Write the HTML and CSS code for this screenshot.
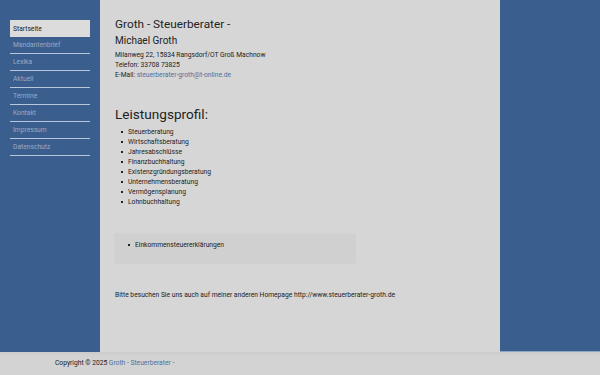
FILE: index.html
```html
<!DOCTYPE html>
<html lang="de">
<head>
<meta charset="utf-8">
<title>Groth - Steuerberater -</title>
<link rel="stylesheet" href="styles.css">
</head>
<body>
<div class="page">
  <nav class="sidebar">
    <ul class="menu">
      <li class="item active"><a href="#">Startseite</a></li>
      <li class="item"><a href="#">Mandantenbrief</a></li>
      <li class="item"><a href="#">Lexika</a></li>
      <li class="item"><a href="#">Aktuell</a></li>
      <li class="item"><a href="#">Termine</a></li>
      <li class="item"><a href="#">Kontakt</a></li>
      <li class="item"><a href="#">Impressum</a></li>
      <li class="item"><a href="#">Datenschutz</a></li>
    </ul>
  </nav>
  <main class="content">
    <h1 class="title">Groth - Steuerberater -</h1>
    <h2 class="subtitle">Michael Groth</h2>
    <p class="address">Milanweg 22, 15834 Rangsdorf/OT Groß Machnow<br>Telefon: 33708 73825<br>E-Mail: <a class="link" href="#">steuerberater-groth@t-online.de</a></p>
    <h2 class="section">Leistungsprofil:</h2>
    <ul class="services">
      <li>Steuerberatung</li>
      <li>Wirtschaftsberatung</li>
      <li>Jahresabschlüsse</li>
      <li>Finanzbuchhaltung</li>
      <li>Existenzgründungsberatung</li>
      <li>Unternehmensberatung</li>
      <li>Vermögensplanung</li>
      <li>Lohnbuchhaltung</li>
    </ul>
    <div class="box">
      <ul class="services">
        <li>Einkommensteuererklärungen</li>
      </ul>
    </div>
    <p class="note">Bitte besuchen Sie uns auch auf meiner anderen Homepage http://www.steuerberater-groth.de</p>
  </main>
  <aside class="right"></aside>
</div>
<footer class="footer">Copyright © 2025 <a class="link" href="#">Groth - Steuerberater -</a></footer>
</body>
</html>
```
FILE: styles.css
```css
html, body {
  margin: 0;
  padding: 0;
}
body {
  background: #d3d3d3;
  font-family: Roboto, "Liberation Sans", sans-serif;
  color: #222;
  width: 600px;
  height: 375px;
  overflow: hidden;
}
.page {
  display: grid;
  grid-template-columns: 100px 400px 100px;
  height: 352px;
}
.sidebar {
  background: #3a5e8d;
  padding: 20px 10px 0;
}
.right {
  background: #3a5e8d;
  border-bottom: 1px solid #8ea6c4;
  box-sizing: border-box;
}
.menu {
  list-style: none;
  margin: 0;
  padding: 0;
}
.item {
  height: 17px;
  box-sizing: border-box;
  border-bottom: 1px solid #b7c7dc;
  display: flex;
  align-items: center;
  padding-left: 3px;
}
.item a {
  font-size: 6.7px;
  color: #97abc7;
  text-decoration: none;
}
.item.active {
  background: #dcdcdc;
  border-bottom: none;
}
.item.active a {
  color: #222;
}
.content {
  background: #d6d6d6;
  padding: 17px 15px 0;
}
.title {
  font-size: 11.8px;
  font-weight: 400;
  line-height: 14px;
  margin: 0 0 4px;
}
.subtitle {
  font-size: 10px;
  font-weight: 400;
  line-height: 12px;
  margin: 0 0 3px;
}
.address {
  font-size: 6.7px;
  line-height: 10px;
  margin: 0;
}
.link {
  color: #4d72a0;
  text-decoration: none;
}
.section {
  font-size: 13.6px;
  font-weight: 400;
  line-height: 16px;
  margin: 26px 0 0;
}
.services {
  margin: 5px 0 0;
  padding: 0 0 0 6px;
  font-size: 6.7px;
  line-height: 10px;
  list-style: none;
}
.services li {
  display: flex;
  align-items: center;
  gap: 5px;
}
.services li::before {
  content: "";
  width: 2px;
  height: 2px;
  background: #222;
  flex: none;
}
.box {
  width: 240px;
  height: 29px;
  box-sizing: border-box;
  margin-top: 27px;
  background: #d0d0d0;
  box-shadow: 0 0 2px rgba(0,0,0,0.06);
  padding: 6px 7px 0;
}
.box .services {
  margin: 0;
}
.note {
  font-size: 6.7px;
  line-height: 10px;
  margin: 27px 0 0;
}
.footer {
  height: 23px;
  box-sizing: border-box;
  padding: 6px 0 0 55px;
  font-size: 6.7px;
  line-height: 10px;
  color: #222;
  background: linear-gradient(#cbcbcb, #d3d3d3 4px);
}
```
